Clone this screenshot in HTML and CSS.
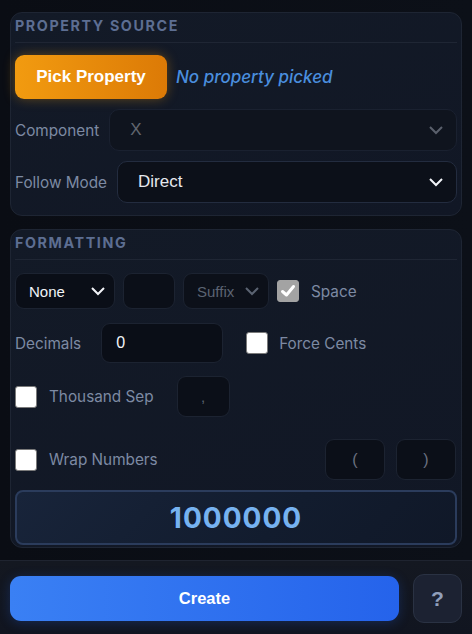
FILE: index.html
```html
<!DOCTYPE html>
<html>
<head>
<meta charset="utf-8">
<link rel="stylesheet" href="styles.css">
</head>
<body>
<main class="content">
  <section class="panel">
    <div class="panel-head">PROPERTY SOURCE</div>
    <div class="panel-body source">
      <div class="pick-row">
        <button class="pick-btn">Pick Property</button>
        <span class="pick-status">No property picked</span>
      </div>
      <div class="field-row">
        <span class="label">Component</span>
        <div class="select big disabled">
          <span>X</span>
          <svg class="chev" width="16" height="10" viewBox="0 0 16 10"><polyline points="2,2 8,8 14,2" fill="none" stroke="currentColor" stroke-width="2"/></svg>
        </div>
      </div>
      <div class="field-row">
        <span class="label">Follow Mode</span>
        <div class="select big active">
          <span>Direct</span>
          <svg class="chev" width="16" height="10" viewBox="0 0 16 10"><polyline points="2,2 8,8 14,2" fill="none" stroke="currentColor" stroke-width="2"/></svg>
        </div>
      </div>
    </div>
  </section>

  <section class="panel second">
    <div class="panel-head">FORMATTING</div>
    <div class="panel-body fmt">
      <div class="frow r1">
        <div class="select small currency">
          <span>None</span>
          <svg class="chev" width="16" height="10" viewBox="0 0 16 10"><polyline points="2,2 8,8 14,2" fill="none" stroke="currentColor" stroke-width="2"/></svg>
        </div>
        <div class="box prefix"></div>
        <div class="select small suffix">
          <span>Suffix</span>
          <svg class="chev" width="16" height="10" viewBox="0 0 16 10"><polyline points="2,2 8,8 14,2" fill="none" stroke="currentColor" stroke-width="2"/></svg>
        </div>
        <span class="check checked"><svg width="16" height="14" viewBox="0 0 16 14"><polyline points="2.5,7.5 6.5,11 13.5,2.5" fill="none" stroke="#fff" stroke-width="3" stroke-linecap="round" stroke-linejoin="round"/></svg></span>
        <span class="clabel">Space</span>
      </div>
      <div class="frow r2">
        <span class="label">Decimals</span>
        <div class="box decimals">0</div>
        <span class="check fc"></span>
        <span class="clabel">Force Cents</span>
      </div>
      <div class="frow r3">
        <span class="check"></span>
        <span class="clabel">Thousand Sep</span>
        <div class="box sep">,</div>
      </div>
      <div class="frow r4">
        <span class="check"></span>
        <span class="clabel">Wrap Numbers</span>
        <div class="wraps">
          <div class="box paren">(</div>
          <div class="box paren">)</div>
        </div>
      </div>
      <div class="preview">1000000</div>
    </div>
  </section>
</main>
<footer class="footer">
  <button class="create-btn">Create</button>
  <button class="help-btn">?</button>
</footer>
</body>
</html>
```

FILE: styles.css
```css
html, body {
  margin: 0;
  padding: 0;
}
body {
  width: 472px;
  height: 634px;
  overflow: hidden;
  background: #0b0e15;
  font-family: Inter, "Noto Sans", sans-serif;
  color: #8391a9;
  display: flex;
  flex-direction: column;
}
.content {
  flex: 1;
  padding: 12px 10px 0;
  background: linear-gradient(90deg, #0a0d14 0%, #0c1018 100%);
}
.panel {
  border: 1px solid #1e2533;
  border-radius: 12px;
  background: linear-gradient(160deg, #131a27 0%, #111725 100%);
  padding: 0 4px;
}
.panel.second {
  margin-top: 13px;
}
.panel-head {
  padding: 3px 0 7px;
  line-height: 19px;
  font-size: 14.3px;
  font-weight: 700;
  letter-spacing: 1.6px;
  color: #5d6e92;
  border-bottom: 1px solid #1f2634;
}
.panel-body.source {
  padding: 12px 0 12px;
  display: flex;
  flex-direction: column;
  gap: 10px;
}
.pick-row {
  display: flex;
  align-items: center;
  gap: 9px;
}
.pick-btn {
  height: 44px;
  width: 152px;
  border: none;
  border-radius: 9px;
  background: linear-gradient(90deg, #f29b10 0%, #dc7a06 100%);
  box-shadow: 0 0 12px rgba(245, 158, 11, 0.35);
  color: #fff;
  font-family: "Liberation Sans", Arial, sans-serif;
  font-weight: 700;
  font-size: 17px;
  padding: 0;
}
.pick-status {
  font-style: italic;
  font-size: 17px;
  color: #4a8ede;
  font-weight: 500;
}
.field-row {
  display: flex;
  align-items: center;
  gap: 10px;
}
.label {
  font-size: 15.3px;
  color: #7d8aa3;
}
.select {
  display: flex;
  align-items: center;
  justify-content: space-between;
  box-sizing: border-box;
  border-radius: 10px;
  background: #0c1019;
  font-family: "Liberation Sans", Arial, sans-serif;
}
.select.big {
  flex: 1;
  height: 42px;
  padding: 0 12px 0 20px;
  font-size: 17px;
}
.select.disabled {
  border: 1px solid #1a2130;
  background: #0f141e;
  color: #61666f;
}
.select.disabled .chev { color: #5a606c; }
.select.active {
  border: 1px solid #232c3f;
  color: #e6e9ef;
}
.select.active .chev { color: #f2f4f8; }
.chev { display: block; }

.panel-body.fmt {
  padding: 13px 0 2px;
}
.frow {
  display: flex;
  align-items: center;
}
.r1 { height: 36px; }
.r2 { height: 40px; margin-top: 14px; }
.r3 { height: 41px; margin-top: 13px; }
.r4 { height: 41px; margin-top: 22px; }

.select.small {
  height: 36px;
  border: 1px solid #1c2331;
  border-radius: 9px;
  font-size: 15px;
  padding: 0 8px 0 13px;
}
.select.currency {
  width: 100px;
  color: #f2f4f8;
  background: #0a0e17;
}
.select.currency .chev { color: #f2f4f8; }
.select.suffix {
  width: 86px;
  margin-left: 8px;
  color: #5b6372;
  padding-left: 13px;
}
.select.suffix .chev { color: #5b6372; }

.box {
  box-sizing: border-box;
  border: 1px solid #1c2331;
  border-radius: 9px;
  background: #0b0f18;
  display: flex;
  align-items: center;
  font-family: "Liberation Sans", Arial, sans-serif;
}
.box.prefix {
  width: 52px;
  height: 36px;
  margin-left: 8px;
}
.box.decimals {
  width: 122px;
  height: 40px;
  margin-left: 20px;
  padding-left: 14px;
  color: #f2f4f8;
  font-size: 16px;
  background: #0a0e17;
}
.box.sep {
  width: 53px;
  height: 41px;
  margin-left: 23px;
  justify-content: center;
  color: #5b6372;
  font-size: 15px;
}
.wraps {
  margin-left: auto;
  margin-right: 1px;
  display: flex;
  gap: 11px;
}
.box.paren {
  width: 60px;
  height: 41px;
  justify-content: center;
  color: #6a7180;
  font-size: 16px;
}

.check {
  box-sizing: border-box;
  width: 22px;
  height: 22px;
  border-radius: 3px;
  border: 1px solid #7a7a7a;
  background: #fff;
  display: flex;
  align-items: center;
  justify-content: center;
  flex: none;
}
.check.checked {
  margin-left: 8px;
  background: #a3a3a3;
  border-color: #a3a3a3;
}
.check.fc {
  margin-left: 23px;
}
.clabel {
  font-size: 15.3px;
  color: #7d8aa3;
  margin-left: 12px;
}
.r2 .clabel { margin-left: 11px; }

.preview {
  margin-top: 10px;
  box-sizing: border-box;
  height: 55px;
  border: 2px solid #2b3c5c;
  border-radius: 8px;
  background: linear-gradient(135deg, #18243a 0%, #121c2e 60%, #101828 100%);
  display: flex;
  align-items: center;
  justify-content: center;
  color: #76b2f0;
  font-size: 28px;
  font-weight: 700;
  letter-spacing: 1px;
}

.footer {
  height: 74px;
  box-sizing: border-box;
  border-top: 1px solid #1f2430;
  background: linear-gradient(180deg, #141821 0%, #111520 100%);
  padding: 15px 10px 0;
  display: flex;
  align-items: flex-start;
  gap: 14px;
}
.create-btn {
  flex: 1;
  height: 45px;
  border: none;
  border-radius: 11px;
  background: linear-gradient(90deg, #3a80f4 0%, #2563eb 100%);
  box-shadow: 0 2px 12px rgba(37, 99, 235, 0.25);
  color: #fff;
  font-family: "Liberation Sans", Arial, sans-serif;
  font-weight: 700;
  font-size: 16.5px;
}
.help-btn {
  width: 49px;
  height: 49px;
  margin-top: -2px;
  box-sizing: border-box;
  border: 1px solid #2a3243;
  border-radius: 11px;
  background: #1c2232;
  color: #909fbb;
  font-family: "Liberation Sans", Arial, sans-serif;
  font-weight: 700;
  font-size: 21px;
  padding: 0;
}
```
